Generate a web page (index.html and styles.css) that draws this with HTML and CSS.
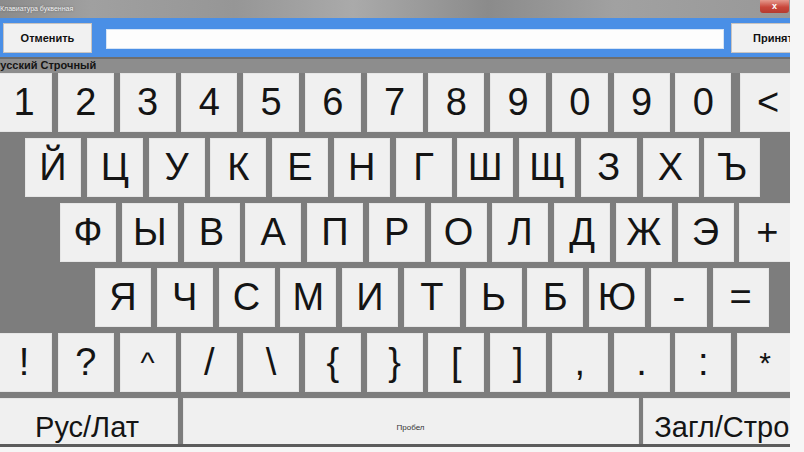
FILE: index.html
```html
<!DOCTYPE html>
<html lang="ru">
<head>
<meta charset="utf-8">
<title>Клавиатура буквенная</title>
<link rel="stylesheet" href="styles.css">
</head>
<body>
<div class="window">
  <div class="titlebar">
    <span class="title">Клавиатура буквенная</span>
    <span class="close">x</span>
  </div>
  <div class="toolbar">
    <button class="btn">Отменить</button>
    <div class="input"></div>
    <button class="btn accept">Принять</button>
  </div>
  <div class="mode">Русский Строчный</div>
  <div class="keys">
    <div class="row r1">
      <div class="key">1</div><div class="key">2</div><div class="key">3</div><div class="key">4</div><div class="key">5</div><div class="key">6</div><div class="key">7</div><div class="key">8</div><div class="key">9</div><div class="key">0</div><div class="key">9</div><div class="key">0</div><div class="key back">&lt;</div>
    </div>
    <div class="row r2">
      <div class="key">Й</div><div class="key">Ц</div><div class="key">У</div><div class="key">К</div><div class="key">Е</div><div class="key">Н</div><div class="key">Г</div><div class="key">Ш</div><div class="key">Щ</div><div class="key">З</div><div class="key">Х</div><div class="key">Ъ</div>
    </div>
    <div class="row r3">
      <div class="key">Ф</div><div class="key">Ы</div><div class="key">В</div><div class="key">А</div><div class="key">П</div><div class="key">Р</div><div class="key">О</div><div class="key">Л</div><div class="key">Д</div><div class="key">Ж</div><div class="key">Э</div><div class="key">+</div>
    </div>
    <div class="row r4">
      <div class="key">Я</div><div class="key">Ч</div><div class="key">С</div><div class="key">М</div><div class="key">И</div><div class="key">Т</div><div class="key">Ь</div><div class="key">Б</div><div class="key">Ю</div><div class="key">-</div><div class="key">=</div>
    </div>
    <div class="row r5">
      <div class="key">!</div><div class="key">?</div><div class="key small">^</div><div class="key">/</div><div class="key">\</div><div class="key">{</div><div class="key">}</div><div class="key">[</div><div class="key">]</div><div class="key">,</div><div class="key">.</div><div class="key">:</div><div class="key small">*</div>
    </div>
    <div class="row r6">
      <div class="key wide lang">Рус/Лат</div><div class="key space">Пробел</div><div class="key wide caps">Загл/Строч</div>
    </div>
  </div>
</div>
</body>
</html>
```

FILE: styles.css
```css
html, body {
  margin: 0;
  padding: 0;
  background: #f6f6f6;
}
body {
  width: 804px;
  height: 452px;
  overflow: hidden;
  font-family: "Liberation Sans", Arial, sans-serif;
}
.window {
  margin-left: -4px;
  width: 794px;
  height: 444px;
  background: #7d7d7d;
  overflow: hidden;
  border-bottom: 3px solid #5c5c5c;
  display: flex;
  flex-direction: column;
}
.titlebar {
  height: 18px;
  flex: none;
  position: relative;
  background: linear-gradient(90deg, #8a8a8a 0%, #a0a0a0 12%, #969696 30%, #aaaaaa 45%, #8b8b8b 62%, #a1a1a1 78%, #989898 100%);
}
.title {
  position: absolute;
  left: 4px;
  top: 4px;
  font-size: 7px;
  line-height: 9px;
  color: #f4f4f4;
  text-shadow: 0 0 2px #555;
}
.close {
  position: absolute;
  left: 764px;
  top: 0;
  width: 29px;
  height: 13px;
  border-radius: 0 0 3px 3px;
  background: linear-gradient(#e59a8e, #c9473b 55%, #b53a2f);
  color: #fff;
  font-size: 9px;
  line-height: 12px;
  text-align: center;
  font-weight: bold;
}
.toolbar {
  height: 39px;
  flex: none;
  background: #4a8fe6;
  display: flex;
  align-items: center;
  padding-left: 7px;
}
.btn {
  flex: none;
  width: 89px;
  height: 30px;
  margin: 0;
  padding: 0;
  border: 1px solid #c9c4c0;
  background: #f1f1f1;
  font-family: "Liberation Sans", Arial, sans-serif;
  font-weight: bold;
  font-size: 11px;
  color: #111;
}
.input {
  flex: none;
  width: 618px;
  height: 20px;
  margin-left: 14px;
  margin-top: 2px;
  background: #fdfdfd;
  border: 1px solid #d6e4f5;
  box-sizing: border-box;
}
.accept {
  margin-left: 7px;
  margin-top: 1px;
  text-align: left;
  padding-left: 21px;
}
.mode {
  height: 16px;
  flex: none;
  box-sizing: border-box;
  border-top: 2px solid #6e6e6e;
  background: #8d8d8d;
  font-weight: bold;
  font-size: 11px;
  line-height: 13px;
  color: #141414;
  text-indent: -3px;
}
.keys {
  display: flex;
  flex-direction: column;
  gap: 6px;
}
.row {
  display: flex;
  gap: 5.75px;
  height: 59px;
  flex: none;
}
.r2 { padding-left: 29px; }
.r3 { padding-left: 64px; }
.r4 { padding-left: 99px; }
.key {
  flex: none;
  width: 56px;
  height: 59px;
  box-sizing: border-box;
  background: #f0f0f0;
  border: 1px solid #e6e6e6;
  display: flex;
  align-items: center;
  justify-content: center;
  font-size: 38px;
  color: #141414;
}
.key.small { font-size: 30px; }
.back { margin-left: 3px; }
.r6 { gap: 4.5px; }
.lang { width: 182px; font-size: 29px; }
.space { width: 456px; font-size: 8px; color: #333; }
.caps { width: 172px; font-size: 29px; }
```
